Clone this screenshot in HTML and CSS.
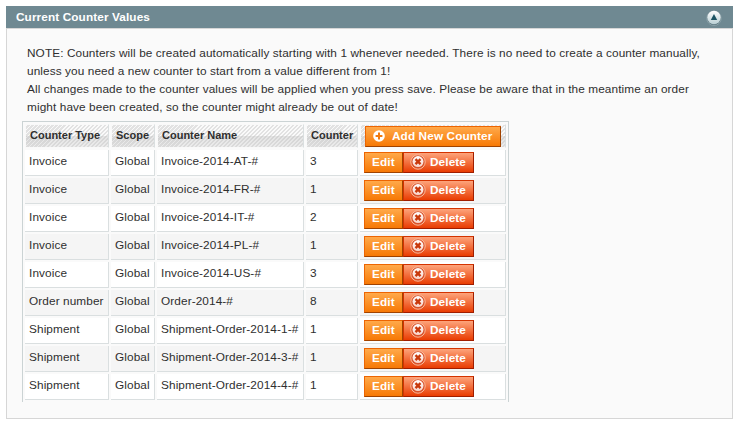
FILE: index.html
```html
<!DOCTYPE html>
<html lang="en">
<head>
<meta charset="utf-8">
<title>Current Counter Values</title>
<link rel="stylesheet" href="styles.css">
</head>
<body>
<svg class="defs" width="0" height="0">
  <defs>
    <linearGradient id="ball" x1="0" y1="0" x2="0" y2="1"><stop offset="0" stop-color="#fff"/><stop offset="1" stop-color="#b9cfd4"/></linearGradient>
    <linearGradient id="disc" x1="0" y1="0" x2="0" y2="1"><stop offset="0" stop-color="#fff"/><stop offset="1" stop-color="#f9d3c8"/></linearGradient>
    <symbol id="remove" viewBox="0 0 16 16">
      <circle cx="8" cy="8" r="7.2" fill="#d9522a" stroke="#fbc3a6" stroke-width=".9"/>
      <circle cx="8" cy="7.6" r="5.5" fill="url(#disc)"/>
      <path d="M5.5 5.1l5 5M10.5 5.1l-5 5" stroke="#c8390c" stroke-width="2.3"/>
    </symbol>
  </defs>
</svg>
<section class="panel">
  <header class="panel-head">
    <h1>Current Counter Values</h1>
    <svg class="toggle" width="16" height="16" viewBox="0 0 16 16"><circle cx="8" cy="8.3" r="7.2" fill="#5b767f" stroke="#94aab0" stroke-width=".8"/><circle cx="8" cy="7.5" r="6.7" fill="url(#ball)"/><path d="M8 4l3.2 6H4.8z" fill="#1c5363"/></svg>
  </header>
  <div class="panel-body">
    <p class="note">NOTE: Counters will be created automatically starting with 1 whenever needed. There is no need to create a counter manually,<br>unless you need a new counter to start from a value different from 1!<br>All changes made to the counter values will be applied when you press save. Please be aware that in the meantime an order<br>might have been created, so the counter might already be out of date!</p>
    <table class="counters">
      <colgroup><col class="c-type"><col class="c-scope"><col class="c-name"><col class="c-count"><col class="c-act"></colgroup>
      <thead><tr><th>Counter Type</th><th>Scope</th><th>Counter Name</th><th>Counter</th><th class="add-cell"><button class="btn add"><svg width="12" height="12" viewBox="0 0 12 12"><circle cx="6" cy="6" r="5.8" fill="#fff"/><path d="M6 2.6v6.8M2.6 6h6.8" stroke="#f17a10" stroke-width="2"/></svg><span>Add New Counter</span></button></th></tr></thead>
      <tbody>
        <tr><td>Invoice</td><td>Global</td><td>Invoice-2014-AT-#</td><td>3</td><td class="act"><div class="actions"><button class="btn">Edit</button><button class="btn del"><svg width="16" height="16"><use href="#remove"/></svg><span>Delete</span></button></div></td></tr>
        <tr><td>Invoice</td><td>Global</td><td>Invoice-2014-FR-#</td><td>1</td><td class="act"><div class="actions"><button class="btn">Edit</button><button class="btn del"><svg width="16" height="16"><use href="#remove"/></svg><span>Delete</span></button></div></td></tr>
        <tr><td>Invoice</td><td>Global</td><td>Invoice-2014-IT-#</td><td>2</td><td class="act"><div class="actions"><button class="btn">Edit</button><button class="btn del"><svg width="16" height="16"><use href="#remove"/></svg><span>Delete</span></button></div></td></tr>
        <tr><td>Invoice</td><td>Global</td><td>Invoice-2014-PL-#</td><td>1</td><td class="act"><div class="actions"><button class="btn">Edit</button><button class="btn del"><svg width="16" height="16"><use href="#remove"/></svg><span>Delete</span></button></div></td></tr>
        <tr><td>Invoice</td><td>Global</td><td>Invoice-2014-US-#</td><td>3</td><td class="act"><div class="actions"><button class="btn">Edit</button><button class="btn del"><svg width="16" height="16"><use href="#remove"/></svg><span>Delete</span></button></div></td></tr>
        <tr><td>Order number</td><td>Global</td><td>Order-2014-#</td><td>8</td><td class="act"><div class="actions"><button class="btn">Edit</button><button class="btn del"><svg width="16" height="16"><use href="#remove"/></svg><span>Delete</span></button></div></td></tr>
        <tr><td>Shipment</td><td>Global</td><td>Shipment-Order-2014-1-#</td><td>1</td><td class="act"><div class="actions"><button class="btn">Edit</button><button class="btn del"><svg width="16" height="16"><use href="#remove"/></svg><span>Delete</span></button></div></td></tr>
        <tr><td>Shipment</td><td>Global</td><td>Shipment-Order-2014-3-#</td><td>1</td><td class="act"><div class="actions"><button class="btn">Edit</button><button class="btn del"><svg width="16" height="16"><use href="#remove"/></svg><span>Delete</span></button></div></td></tr>
        <tr><td>Shipment</td><td>Global</td><td>Shipment-Order-2014-4-#</td><td>1</td><td class="act"><div class="actions"><button class="btn">Edit</button><button class="btn del"><svg width="16" height="16"><use href="#remove"/></svg><span>Delete</span></button></div></td></tr>
      </tbody>
    </table>
  </div>
</section>
</body>
</html>
```
FILE: styles.css
```css
* { box-sizing: border-box; }
body { margin: 0; padding: 6px 7px 0 6px; background: #fff; color: #2f2f2f; font: 11.8px/18px "Liberation Sans", Arial, sans-serif; letter-spacing: .1px; }
.defs { display: block; height: 0; }
.panel-head { height: 22px; background: #6f8992; display: flex; align-items: center; justify-content: space-between; padding: 0 11px 0 10px; }
.panel-head h1 { margin: 0; color: #fff; font-size: 11.8px; line-height: 22px; letter-spacing: .1px; }
.toggle { margin-top: 2px; }
.panel-body { height: 391px; border: 1px solid #d6d6d6; background: #fafafa; padding: 15px 15px 0; }
.note { margin: 0 0 5px 5px; white-space: nowrap; }
.counters { table-layout: fixed; width: 487px; border: 1px solid #cbd3d4; border-bottom: 0; border-collapse: separate; border-spacing: 2px; }
.c-type { width: 84px; }
.c-scope { width: 44px; }
.c-name { width: 147px; }
.c-count { width: 52px; }
.c-act { width: 146px; }
th { height: 24px; padding: 0 4px 3px; text-align: left; font-size: 11px; line-height: 18px; letter-spacing: 0; white-space: nowrap; border: 1px solid #f9f9f9; border-right-color: #dadfe0; background: linear-gradient(transparent 50%, rgba(175,175,175,.3) 50%, rgba(205,205,205,.3)) padding-box, repeating-linear-gradient(135deg, #fafafa 0 1.4px, #e2e2e2 1.4px 2.83px) padding-box; }
td { height: 26px; padding: 0 4px 3px; line-height: 18px; white-space: nowrap; background: #fff; border: solid #dadfe0; border-width: 0 1px 1px 0; }
tbody tr:nth-child(even) td { background: #f5f5f5; }
.add-cell, .counters .act { padding: 0 4px; }
.actions { display: flex; }
.btn { display: flex; align-items: center; height: 21px; margin: 0; padding: 0 7px; border: 1px solid; border-color: #ed6502 #a04300 #a04300 #ed6502; background: linear-gradient(#ffa94a, #f77905); color: #fff; font: bold 11.8px/18px "Liberation Sans", Arial, sans-serif; letter-spacing: .1px; white-space: nowrap; }
.btn svg { flex: none; }
.actions .btn { width: 39px; padding-bottom: 2px; }
.actions .del { width: 71px; padding: 0 0 2px 6px; gap: 4px; border-color: #d43300 #a01e00 #a01e00 #d43300; background: linear-gradient(#fda47b, #e93c02); }
.add { width: 136px; gap: 7px; }
```
